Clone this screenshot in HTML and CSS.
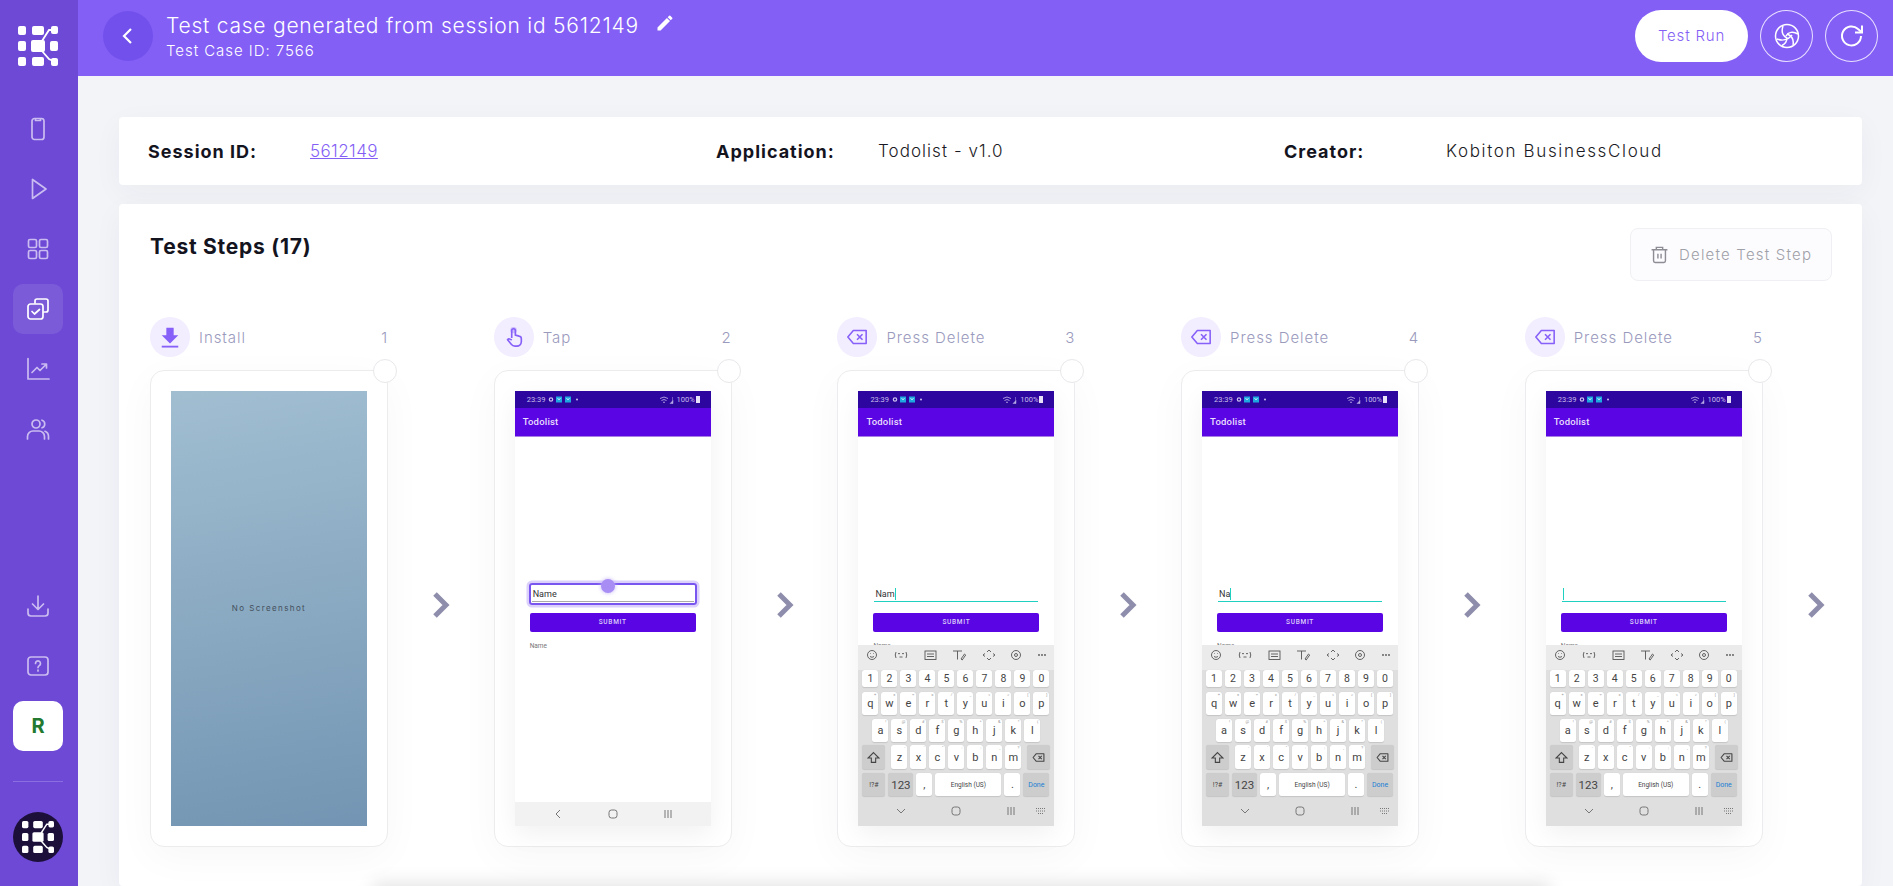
FILE: index.html
```html
<!DOCTYPE html>
<html lang="en">
<head>
<meta charset="utf-8">
<title>Test case</title>
<link rel="stylesheet" href="styles.css">
</head>
<body>
<svg class="defs" width="0" height="0" aria-hidden="true">
  <symbol id="logo" viewBox="0 0 40 40">
    <g fill="currentColor">
      <rect x="0" y="0" width="8" height="9" rx="2"/><rect x="14" y="0" width="12" height="9" rx="2"/>
      <rect x="0" y="15" width="8" height="10" rx="2"/><rect x="13" y="14" width="14" height="12" rx="2"/><rect x="32" y="15" width="8" height="10" rx="2"/>
      <rect x="0" y="31" width="8" height="9" rx="2"/><rect x="14" y="31" width="12" height="9" rx="2"/><rect x="33" y="32" width="7" height="8" rx="2"/>
      <rect x="33" y="0" width="7" height="8" rx="2"/>
    </g>
    <path d="M35 4 L31 4 L24 15 M24 25 L31 33 L35 35" stroke="currentColor" stroke-width="1.800" fill="none"/>
  </symbol>
  <symbol id="sl" viewBox="0 0 36 17">
    <circle cx="4" cy="8.500" r="1.700" fill="none" stroke="#ccc0ee" stroke-width="1.200"/>
    <rect x="9" y="5.500" width="6" height="6" fill="#1fa8e0"/><rect x="18" y="5.500" width="6" height="6" fill="#1fa8e0"/>
    <path d="M10.500 7l1.500 2 1.500-2M19.500 7l1.500 2 1.500-2" fill="none" stroke="#d8f0ff" stroke-width=".8"/>
    <circle cx="30" cy="8.500" r="1" fill="#ccc0ee"/>
  </symbol>
  <symbol id="sr" viewBox="0 0 14 8">
    <path d="M0 2.500q4-3 8 0M1.500 4.500q2.500-2 5 0M3 6.500q1-1 2 0" fill="none" stroke="#b7a9e4" stroke-width=".9"/>
    <path d="M10 7.500l3-3v3zM12.500 1v6.500" fill="#b7a9e4" stroke="#b7a9e4" stroke-width=".5"/>
  </symbol>
  <symbol id="nav-back" viewBox="0 0 10 10"><path d="M7 1 L3 5 L7 9" fill="none" stroke="#777" stroke-width="1"/></symbol>
  <symbol id="nav-home" viewBox="0 0 10 10"><rect x="1" y="1" width="8" height="8" rx="2.500" fill="none" stroke="#777"/></symbol>
  <symbol id="nav-rec" viewBox="0 0 10 10"><path d="M2 1v8M5 1v8M8 1v8" stroke="#777"/></symbol>
  <symbol id="nav-down" viewBox="0 0 10 10"><path d="M1 3 L5 7 L9 3" fill="none" stroke="#777"/></symbol>
  <symbol id="nav-kbd" viewBox="0 0 10 10"><path d="M0 2.500h10M0 5h10M2 7.500h6" stroke="#777" stroke-dasharray="1 1"/></symbol>
  <symbol id="del" viewBox="0 0 24 24"><path d="M8 5h14v14H8l-6-7z" fill="none" stroke="#8660f8" stroke-width="1.700" stroke-linejoin="round"/><path d="M12 9l6 6M18 9l-6 6" stroke="#8660f8" stroke-width="1.700"/></symbol>
  <symbol id="bs" viewBox="0 0 24 24"><path d="M8 5h14v14H8l-6-7z" fill="none" stroke="#444" stroke-width="2" stroke-linejoin="round"/><path d="M12 9l6 6M18 9l-6 6" stroke="#444" stroke-width="2"/></symbol>
  <symbol id="shift" viewBox="0 0 12 12"><path d="M6 1.500 L11 6.500 H8 V10.500 H4 V6.500 H1 Z" fill="none" stroke="#444" stroke-width="1"/></symbol>
  <symbol id="chev" viewBox="0 0 20 28"><path d="M4 3 L15 14 L4 25" fill="none" stroke="#8e8eac" stroke-width="5"/></symbol>
  <symbol id="kbbar" viewBox="0 0 196 25">
    <g fill="none" stroke="#555" stroke-width=".9">
      <circle cx="14" cy="10" r="4.500"/><path d="M12 11.500q2 1.600 4 0M12.300 8.500h.6M15.100 8.500h.6"/>
      <path d="M38 7q-1.500 3 0 6M48 7q1.500 3 0 6M40 9q1-1.500 2 0M44 9q1-1.500 2 0M41.500 12h3"/>
      <rect x="67" y="6" width="11" height="8.500"/><path d="M69 9h7M69 11.500h7"/>
      <path d="M95 6h9M99.500 6v8.500M103 14l3.500-5 1.200 1-3.500 5z"/>
      <path d="M129 7l2-2 2 2M129 13l2 2 2-2M127 8.500l-2 1.500 2 1.500M135 8.500l2 1.500-2 1.500"/>
      <circle cx="158" cy="10" r="4.500"/><circle cx="158" cy="10" r="1.500"/>
    </g>
    <g fill="#555"><circle cx="181" cy="10" r=".9"/><circle cx="184" cy="10" r=".9"/><circle cx="187" cy="10" r=".9"/></g>
  </symbol>
</svg>

<div class="app">
  <aside class="sidebar">
    <svg class="brand"><use href="#logo"/></svg>
    <nav class="nav">
      <a class="nav-item"><svg viewBox="0 0 24 24" class="ico"><rect x="6" y="1.500" width="12" height="21" rx="2.500"/><path d="M9.500 2v1.500h5V2"/></svg></a>
      <a class="nav-item"><svg viewBox="0 0 24 24" class="ico"><path d="M6.500 2.500v19L20 12z"/></svg></a>
      <a class="nav-item"><svg viewBox="0 0 24 24" class="ico"><rect x="2.500" y="2.500" width="8" height="8" rx="1.500"/><rect x="13.500" y="2.500" width="8" height="8" rx="1.500"/><rect x="2.500" y="13.500" width="8" height="8" rx="1.500"/><rect x="13.500" y="13.500" width="8" height="8" rx="1.500"/></svg></a>
      <a class="nav-item is-active"><svg viewBox="0 0 24 24" class="ico"><path d="M9 6V4a2 2 0 0 1 2-2h9a2 2 0 0 1 2 2v9a2 2 0 0 1-2 2h-2"/><rect x="2" y="7" width="15" height="15" rx="2.500"/><path d="M6 14.500l2.500 2.500 5-4.500"/></svg></a>
      <a class="nav-item"><svg viewBox="0 0 24 24" class="ico"><path d="M2 1.500V22h21M6 15.500l5-5 3 3 6-6M16 7h4.500v4"/></svg></a>
      <a class="nav-item"><svg viewBox="0 0 24 24" class="ico"><circle cx="10" cy="7" r="4"/><path d="M1.500 22v-2.500a5.500 5.500 0 0 1 5.500-5.500h6a5.500 5.500 0 0 1 5.500 5.500V22M16 3.200a4 4 0 0 1 0 7.600M19 14.300a5.500 5.500 0 0 1 3.500 5.200V22"/></svg></a>
    </nav>
    <div class="nav nav-bottom">
      <a class="nav-item"><svg viewBox="0 0 24 24" class="ico"><path d="M12 2v13M6.500 10l5.500 5.500 5.500-5.500M2 15v4a3 3 0 0 0 3 3h14a3 3 0 0 0 3-3v-4"/></svg></a>
      <a class="nav-item"><svg viewBox="0 0 24 24" class="ico"><rect x="2" y="3" width="20" height="18" rx="3"/><path d="M9.500 9.500a2.500 2.500 0 1 1 3.800 2.100c-.9.600-1.300 1-1.300 2M12 16v1"/></svg></a>
      <a class="org">R</a>
    </div>
    <hr class="side-rule">
    <div class="avatar"><svg class="avatar-logo"><use href="#logo"/></svg></div>
  </aside>

  <main class="main">
    <header class="topbar">
      <a class="back"><svg viewBox="0 0 24 24" class="back-ico"><path d="M15 5l-7 7 7 7"/></svg></a>
      <div class="heading">
        <div class="title-row">
          <h1 class="title">Test case generated from session id 5612149</h1>
          <svg viewBox="0 0 24 24" class="pencil"><path d="M3 17.300V21h3.700L18 9.700 14.300 6zM20.700 7a1 1 0 0 0 0-1.400l-2.300-2.300a1 1 0 0 0-1.400 0l-1.800 1.800 3.700 3.700z"/></svg>
        </div>
        <p class="subtitle">Test Case ID: 7566</p>
      </div>
      <div class="actions">
        <a class="run">Test Run</a>
        <a class="round"><svg viewBox="0 0 26 26" class="round-ico"><circle cx="13" cy="13" r="11.500"/><path d="M9 3C7 9 9 13 13 15M24 11c-5-3-10-2-12 2M19 22c1-5-1-9-6-11M3 16c5 2 11 1 15-4M8 22.500c4-2 5-5 5-8"/></svg></a>
        <a class="round"><svg viewBox="0 0 26 26" class="round-ico thick"><path d="M22 13a9.500 9.500 0 1 1-3-7l3.500 3"/><path d="M23 2.500V9.500h-7"/></svg></a>
      </div>
    </header>

    <div class="content">
      <section class="panel info">
        <div class="info-item"><span class="info-key">Session ID:</span><a class="info-link">5612149</a></div>
        <div class="info-item"><span class="info-key">Application:</span><span class="info-val">Todolist - v1.0</span></div>
        <div class="info-item"><span class="info-key">Creator:</span><span class="info-val info-val-wide">Kobiton BusinessCloud</span></div>
      </section>

      <section class="panel steps-panel">
        <div class="steps-top">
          <h2 class="steps-title">Test Steps (17)</h2>
          <button class="delete"><svg viewBox="0 0 24 24" class="trash"><path d="M2 6h20M8 6V3h8v3M4.500 6v14a2 2 0 0 0 2 2h11a2 2 0 0 0 2-2V6M10 11v6M14 11v6"/></svg>Delete Test Step</button>
        </div>

        <div class="steps">
          <article class="step">
            <div class="step-head">
              <span class="step-ico"><svg viewBox="0 0 24 24" class="glyph"><path d="M8 2h8v8h5l-9 9-9-9h5z" fill="#8660f8"/><path d="M3 22.500h18" stroke="#8660f8" stroke-width="2"/></svg></span>
              <span class="step-name">Install</span><span class="step-no">1</span>
            </div>
            <div class="step-card"><span class="pick"></span>
              <div class="screen empty"><span class="no-shot">No Screenshot</span></div>
            </div>
          </article>
          <div class="arrow"><svg class="arrow-ico"><use href="#chev"/></svg></div>

          <article class="step">
            <div class="step-head">
              <span class="step-ico"><svg viewBox="0 0 24 24" class="glyph"><path d="M9.500 13V5a2 2 0 0 1 4 0v5l4 1a3 3 0 0 1 2.500 3v3a5 5 0 0 1-5 5h-2a5 5 0 0 1-4-2l-4-5c1-1.500 3-1 4.500.500" fill="none" stroke="#8660f8" stroke-width="1.800"/><circle cx="11.500" cy="4.500" r="3.500" fill="#8660f8" opacity=".35"/></svg></span>
              <span class="step-name">Tap</span><span class="step-no">2</span>
            </div>
            <div class="step-card"><span class="pick"></span>
              <div class="screen">
                <div class="status"><span>23:39</span><svg class="st-l"><use href="#sl"/></svg><svg class="st-m"><use href="#sr"/></svg><span>100%</span><i class="batt"></i></div>
                <div class="appbar">Todolist</div>
                <div class="body">
                  <div class="field tapped"><span>Name</span><i class="touch"></i></div>
                  <div class="submit">SUBMIT</div>
                  <div class="list-name">Name</div>
                </div>
                <div class="softnav light"><svg class="n"><use href="#nav-back"/></svg><svg class="n"><use href="#nav-home"/></svg><svg class="n"><use href="#nav-rec"/></svg></div>
              </div>
            </div>
          </article>
          <div class="arrow"><svg class="arrow-ico"><use href="#chev"/></svg></div>

          <article class="step">
            <div class="step-head">
              <span class="step-ico"><svg class="glyph"><use href="#del"/></svg></span>
              <span class="step-name">Press Delete</span><span class="step-no">3</span>
            </div>
            <div class="step-card"><span class="pick"></span>
              <div class="screen">
                <div class="status"><span>23:39</span><svg class="st-l"><use href="#sl"/></svg><svg class="st-m"><use href="#sr"/></svg><span>100%</span><i class="batt"></i></div>
                <div class="appbar">Todolist</div>
                <div class="body">
                  <div class="field typing"><span>Nam</span><i class="caret"></i></div>
                  <div class="submit">SUBMIT</div>
                  <div class="list-name">Name</div>
                </div>
                <div class="kb">
                  <svg class="kb-bar"><use href="#kbbar"/></svg>
                  <div class="row r1"><b>1</b><b>2</b><b>3</b><b>4</b><b>5</b><b>6</b><b>7</b><b>8</b><b>9</b><b>0</b></div>
                  <div class="row r2"><b data-h="+">q</b><b data-h="×">w</b><b data-h="÷">e</b><b data-h="=">r</b><b data-h="/">t</b><b data-h="_">y</b><b data-h="&lt;">u</b><b data-h="&gt;">i</b><b data-h="[">o</b><b data-h="]">p</b></div>
                  <div class="row r3"><b data-h="!">a</b><b data-h="@">s</b><b data-h="#">d</b><b data-h="$">f</b><b data-h="%">g</b><b data-h="^">h</b><b data-h="&amp;">j</b><b data-h="*">k</b><b data-h="(">l</b></div>
                  <div class="row r4"><b class="fn wide"><svg class="kic"><use href="#shift"/></svg></b><b data-h="-">z</b><b data-h="'">x</b><b data-h="&quot;">c</b><b data-h=":">v</b><b data-h=";">b</b><b data-h=",">n</b><b data-h="?">m</b><b class="fn wide"><svg class="kic"><use href="#bs"/></svg></b></div>
                  <div class="row r5"><b class="fn sym">!?#</b><b class="fn num">123</b><b>,</b><b class="space">English (US)</b><b>.</b><b class="fn done">Done</b></div>
                </div>
                <div class="softnav dark"><svg class="n"><use href="#nav-down"/></svg><svg class="n"><use href="#nav-home"/></svg><svg class="n"><use href="#nav-rec"/></svg><svg class="n kbd"><use href="#nav-kbd"/></svg></div>
              </div>
            </div>
          </article>
          <div class="arrow"><svg class="arrow-ico"><use href="#chev"/></svg></div>

          <article class="step">
            <div class="step-head">
              <span class="step-ico"><svg class="glyph"><use href="#del"/></svg></span>
              <span class="step-name">Press Delete</span><span class="step-no">4</span>
            </div>
            <div class="step-card"><span class="pick"></span>
              <div class="screen">
                <div class="status"><span>23:39</span><svg class="st-l"><use href="#sl"/></svg><svg class="st-m"><use href="#sr"/></svg><span>100%</span><i class="batt"></i></div>
                <div class="appbar">Todolist</div>
                <div class="body">
                  <div class="field typing"><span>Na</span><i class="caret"></i></div>
                  <div class="submit">SUBMIT</div>
                  <div class="list-name">Name</div>
                </div>
                <div class="kb">
                  <svg class="kb-bar"><use href="#kbbar"/></svg>
                  <div class="row r1"><b>1</b><b>2</b><b>3</b><b>4</b><b>5</b><b>6</b><b>7</b><b>8</b><b>9</b><b>0</b></div>
                  <div class="row r2"><b data-h="+">q</b><b data-h="×">w</b><b data-h="÷">e</b><b data-h="=">r</b><b data-h="/">t</b><b data-h="_">y</b><b data-h="&lt;">u</b><b data-h="&gt;">i</b><b data-h="[">o</b><b data-h="]">p</b></div>
                  <div class="row r3"><b data-h="!">a</b><b data-h="@">s</b><b data-h="#">d</b><b data-h="$">f</b><b data-h="%">g</b><b data-h="^">h</b><b data-h="&amp;">j</b><b data-h="*">k</b><b data-h="(">l</b></div>
                  <div class="row r4"><b class="fn wide"><svg class="kic"><use href="#shift"/></svg></b><b data-h="-">z</b><b data-h="'">x</b><b data-h="&quot;">c</b><b data-h=":">v</b><b data-h=";">b</b><b data-h=",">n</b><b data-h="?">m</b><b class="fn wide"><svg class="kic"><use href="#bs"/></svg></b></div>
                  <div class="row r5"><b class="fn sym">!?#</b><b class="fn num">123</b><b>,</b><b class="space">English (US)</b><b>.</b><b class="fn done">Done</b></div>
                </div>
                <div class="softnav dark"><svg class="n"><use href="#nav-down"/></svg><svg class="n"><use href="#nav-home"/></svg><svg class="n"><use href="#nav-rec"/></svg><svg class="n kbd"><use href="#nav-kbd"/></svg></div>
              </div>
            </div>
          </article>
          <div class="arrow"><svg class="arrow-ico"><use href="#chev"/></svg></div>

          <article class="step">
            <div class="step-head">
              <span class="step-ico"><svg class="glyph"><use href="#del"/></svg></span>
              <span class="step-name">Press Delete</span><span class="step-no">5</span>
            </div>
            <div class="step-card"><span class="pick"></span>
              <div class="screen">
                <div class="status"><span>23:39</span><svg class="st-l"><use href="#sl"/></svg><svg class="st-m"><use href="#sr"/></svg><span>100%</span><i class="batt"></i></div>
                <div class="appbar">Todolist</div>
                <div class="body">
                  <div class="field typing"><i class="caret"></i></div>
                  <div class="submit">SUBMIT</div>
                  <div class="list-name">Name</div>
                </div>
                <div class="kb">
                  <svg class="kb-bar"><use href="#kbbar"/></svg>
                  <div class="row r1"><b>1</b><b>2</b><b>3</b><b>4</b><b>5</b><b>6</b><b>7</b><b>8</b><b>9</b><b>0</b></div>
                  <div class="row r2"><b data-h="+">q</b><b data-h="×">w</b><b data-h="÷">e</b><b data-h="=">r</b><b data-h="/">t</b><b data-h="_">y</b><b data-h="&lt;">u</b><b data-h="&gt;">i</b><b data-h="[">o</b><b data-h="]">p</b></div>
                  <div class="row r3"><b data-h="!">a</b><b data-h="@">s</b><b data-h="#">d</b><b data-h="$">f</b><b data-h="%">g</b><b data-h="^">h</b><b data-h="&amp;">j</b><b data-h="*">k</b><b data-h="(">l</b></div>
                  <div class="row r4"><b class="fn wide"><svg class="kic"><use href="#shift"/></svg></b><b data-h="-">z</b><b data-h="'">x</b><b data-h="&quot;">c</b><b data-h=":">v</b><b data-h=";">b</b><b data-h=",">n</b><b data-h="?">m</b><b class="fn wide"><svg class="kic"><use href="#bs"/></svg></b></div>
                  <div class="row r5"><b class="fn sym">!?#</b><b class="fn num">123</b><b>,</b><b class="space">English (US)</b><b>.</b><b class="fn done">Done</b></div>
                </div>
                <div class="softnav dark"><svg class="n"><use href="#nav-down"/></svg><svg class="n"><use href="#nav-home"/></svg><svg class="n"><use href="#nav-rec"/></svg><svg class="n kbd"><use href="#nav-kbd"/></svg></div>
              </div>
            </div>
          </article>
          <div class="arrow"><svg class="arrow-ico"><use href="#chev"/></svg></div>
        </div>
        <div class="footer-shadow"></div>
      </section>
    </div>
  </main>
</div>
</body>
</html>
```
FILE: styles.css
```css
* { box-sizing: border-box; }
html, body { margin: 0; height: 100%; overflow: hidden; }
body { font-family: "Inter", "Liberation Sans", sans-serif; color: #14141f; background: #f3f4f8; }
.defs { position: absolute; }
a { display: block; text-decoration: none; }
svg { display: block; }

.app { display: flex; height: 886px; overflow: hidden; }

/* sidebar */
.sidebar { width: 78px; flex: none; background: #6d49d6; display: flex; flex-direction: column; align-items: center; padding: 26px 2px 24px 0; }
.brand { width: 40px; height: 40px; color: #fff; margin-bottom: 38px; }
.nav { display: flex; flex-direction: column; gap: 10px; }
.nav-bottom { margin-top: auto; }
.nav-item { width: 50px; height: 50px; border-radius: 10px; display: flex; align-items: center; justify-content: center; color: #cabcf0; }
.nav-item.is-active { background: #7c5bd9; color: #fff; }
.ico { width: 24px; height: 24px; fill: none; stroke: currentColor; stroke-width: 1.700; stroke-linecap: round; stroke-linejoin: round; }
.org { width: 50px; height: 50px; background: #fff; border-radius: 10px; color: #22792f; font-weight: 700; font-size: 20px; line-height: 50px; text-align: center; }
.side-rule { width: 50px; height: 1px; border: 0; background: #8b6fe0; margin: 30px 0; flex: none; }
.avatar { width: 50px; height: 50px; border-radius: 50%; background: #1c0f3a; display: flex; align-items: center; justify-content: center; }
.avatar-logo { width: 32px; height: 32px; color: #fff; }

/* top bar */
.main { flex: 1; min-width: 0; display: flex; flex-direction: column; }
.topbar { height: 76px; flex: none; background: #845ff5; padding: 0 15px 4px 25px; display: flex; align-items: center; gap: 13px; color: #fff; }
.back { width: 50px; height: 50px; border-radius: 50%; background: #7150ec; display: flex; align-items: center; justify-content: center; }
.back-ico { width: 24px; height: 24px; fill: none; stroke: #fff; stroke-width: 2.200; }
.heading { flex: 1; }
.title-row { display: flex; align-items: center; gap: 16px; }
.title { margin: 0; font-size: 21px; font-weight: 300; line-height: 26px; letter-spacing: .77px; }
.pencil { width: 20px; height: 20px; fill: #fff; margin-top: -5px; }
.subtitle { margin: 3px 0 0; font-size: 15px; font-weight: 300; line-height: 18px; letter-spacing: .95px; }
.actions { display: flex; align-items: center; gap: 12px; }
.run { width: 113px; height: 52px; border-radius: 26px; background: #fff; color: #845ff5; font-size: 15px; font-weight: 300; line-height: 52px; text-align: center; letter-spacing: .8px; }
.round { width: 53px; height: 52px; border-radius: 50%; border: 1px solid #e8e0ff; display: flex; align-items: center; justify-content: center; }
.round-ico { width: 26px; height: 26px; fill: none; stroke: #fff; stroke-width: 1.500; }
.round-ico.thick { stroke-width: 2; }

/* content */
.content { flex: 1; min-height: 0; padding: 41px 31px 0 41px; display: flex; flex-direction: column; gap: 19px; }
.panel { background: #fff; border-radius: 4px; box-shadow: 0 8px 30px rgba(40, 40, 80, .045); }
.info { height: 68px; flex: none; padding-left: 29px; display: grid; grid-template-columns: repeat(3, 568px); align-items: center; font-size: 17px; }
.info-item { display: flex; align-items: center; }
.info-key { width: 162px; font-size: 18px; font-weight: 700; letter-spacing: 1px; }
.info-link { color: #845ff5; text-decoration: underline; font-weight: 300; letter-spacing: .4px; }
.info-val { font-weight: 300; letter-spacing: 1.050px; color: #1a1a24; }
.info-val-wide { letter-spacing: 1.650px; }

.steps-panel { flex: 1; position: relative; padding: 24px 30px 0 31px; min-height: 0; }
.steps-top { display: flex; justify-content: space-between; align-items: flex-start; }
.steps-title { margin: 4px 0 0; font-size: 21px; font-weight: 700; line-height: 30px; letter-spacing: .75px; }
.delete { width: 202px; height: 53px; border: 1px solid #f0f0f4; border-radius: 8px; background: #fcfcfe; color: #a0a0a8; font: 300 15px "Inter", sans-serif; letter-spacing: 1.200px; display: flex; align-items: center; padding: 0 0 0 19px; gap: 10px; }
.trash { width: 19px; height: 19px; fill: none; stroke: #8d8d96; stroke-width: 1.800; }

.steps { display: flex; margin-top: 36px; }
.step { width: 238px; flex: none; }
.step-head { height: 40px; margin-bottom: 13px; display: flex; align-items: center; color: #9a9abd; font-size: 15px; font-weight: 300; letter-spacing: .95px; }
.step-ico { width: 40px; height: 40px; border-radius: 50%; background: #f2edff; display: flex; align-items: center; justify-content: center; margin-right: 9px; }
.glyph { width: 22px; height: 22px; }
.step-no { margin-left: auto; }
.step-card { position: relative; height: 477px; border: 1px solid #ececee; border-radius: 14px; background: #fff; padding: 20px 20px 0; box-shadow: 0 10px 40px rgba(0, 0, 0, .035); }
.pick { position: absolute; top: -12px; right: -10px; width: 24px; height: 24px; border-radius: 50%; background: #fff; border: 1px solid #e8e8ec; }
.arrow { width: 105.700px; flex: none; display: flex; justify-content: center; padding-top: 274px; }
.arrow-ico { width: 20px; height: 28px; }

/* phone screenshot */
.screen { width: 196px; height: 435px; display: flex; flex-direction: column; overflow: hidden; background: #fff; box-shadow: 0 8px 24px rgba(0, 0, 0, .06); }
.screen.empty { background: linear-gradient(170deg, #a1bed1, #7395b3); align-items: center; justify-content: center; box-shadow: none; padding-bottom: 2px; }
.no-shot { font-size: 8px; letter-spacing: 1.400px; color: #44505c; }
.status { height: 17px; flex: none; background: #2d069f; color: #c8bdec; font: 7.500px "Roboto", sans-serif; display: flex; align-items: center; padding: 0 11px 0 12px; }
.st-l { width: 36px; height: 17px; margin-left: 2px; }
.st-m { width: 14px; height: 8px; margin-left: auto; margin-right: 3px; }
.batt { width: 4px; height: 7px; background: #e6e0f8; margin-left: 1px; }
.appbar { height: 29px; flex: none; background: #5a05e4; border-bottom: 1px solid #a97fe6; color: #e9defc; font: 500 9.500px/27px "Roboto", sans-serif; padding-left: 8px; letter-spacing: .2px; }
.body { flex: 1; min-height: 0; overflow: hidden; padding: 146px 15px 0; font-family: "Roboto", sans-serif; }
.field { height: 22px; position: relative; display: flex; align-items: center; font-size: 9px; color: #333; padding: 0 2px; }
.field.tapped { border: 2px solid #7a56f0; border-radius: 3px; box-shadow: 0 0 0 2.500px #dbd1fb; margin: 0 -1px; }
.field.tapped::after { content: ""; position: absolute; left: 1px; right: 1px; bottom: 1px; height: 1px; background: #aaa; }
.touch { position: absolute; left: 70px; top: -6px; width: 14px; height: 14px; border-radius: 50%; background: #a78df4; box-shadow: 0 0 4px #c4b3f8; }
.field.typing { height: 19px; border-bottom: 1px solid #1fcfbf; margin: 0 1px 11px; padding: 3px 1px 0; }
.caret { width: 1px; height: 12px; background: #1fcfbf; }
.submit { height: 19px; margin-top: 8px; background: #5a05e4; border-radius: 2px; color: #dccff8; font: 500 6.500px/19px "Roboto", sans-serif; letter-spacing: .7px; text-align: center; }
.list-name { margin-top: 10px; font-size: 6.500px; color: #777; }

.kb { height: 151px; flex: none; background: #dfdfdf; font-family: "Roboto", sans-serif; }
.kb-bar { width: 196px; height: 25px; background: #ebebeb; }
.row { display: flex; gap: 3px; padding: 0 4px; }
.row b { position: relative; width: 16px; background: #fff; border-radius: 2.500px; display: flex; align-items: center; justify-content: center; font-weight: 400; font-size: 11px; color: #444; box-shadow: 0 .5px 1px rgba(0, 0, 0, .12); }
.row b[data-h]::after { content: attr(data-h); position: absolute; top: 1px; right: 2px; font-size: 4px; line-height: 4px; color: #999; }
.r1 { height: 17px; }
.r1 b { font-size: 10.500px; }
.r2 { height: 23px; margin-top: 5px; }
.r3 { height: 23px; margin-top: 4px; padding-left: 14px; }
.r4 { height: 24px; margin-top: 3px; }
.r5 { height: 23px; margin-top: 4px; }
.row b.fn { background: #cdcdcd; }
.row b.wide { width: 23px; }
.r4 b.wide:first-child { margin-right: 3px; }
.r4 b.wide:last-child { margin-left: 3px; }
.kic { width: 13px; height: 13px; }
.row b.sym { width: 23px; font-size: 7px; }
.row b.num { width: 25px; font-size: 11.500px; }
.row b.space { width: 66px; font-size: 6.500px; }
.row b.done { width: 26px; font-size: 7px; color: #1a7fd4; }
.softnav { height: 24px; flex: none; display: flex; align-items: center; padding-left: 38px; gap: 45px; }
.softnav.light { background: #f2f2f2; }
.softnav.dark { height: 30px; background: #dfdfdf; }
.n { width: 10px; height: 10px; flex: none; }
.n.kbd { margin-left: -25px; }

.footer-shadow { position: absolute; left: 260px; top: 684px; width: 1165px; height: 40px; background: #ebebeb; box-shadow: 0 0 16px 6px rgba(0, 0, 0, .1); }
```
